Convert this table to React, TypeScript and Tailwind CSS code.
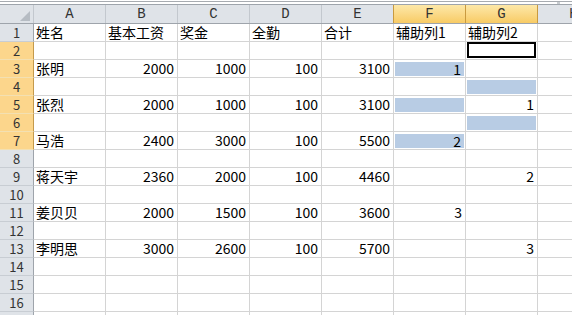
import React from 'react';

type Cell = { t?: string; num?: boolean; fill?: boolean; sel?: boolean };

const FONT = { fontFamily: '"Noto Sans CJK SC", "Noto Sans", sans-serif' };
const HEAD = { fontFamily: '"Liberation Mono", "DejaVu Sans Mono", monospace' };

const names: Record<number, string[]> = {
  1: ['姓名', '基本工资', '奖金', '全勤', '合计', '辅助列1', '辅助列2'],
  3: ['张明', '2000', '1000', '100', '3100', '1', ''],
  5: ['张烈', '2000', '1000', '100', '3100', '', '1'],
  7: ['马浩', '2400', '3000', '100', '5500', '2', ''],
  9: ['蒋天宇', '2360', '2000', '100', '4460', '', '2'],
  11: ['姜贝贝', '2000', '1500', '100', '3600', '3', ''],
  13: ['李明思', '3000', '2600', '100', '5700', '', '3'],
};

const fills: Record<string, boolean> = { '3-5': true, '4-6': true, '5-5': true, '6-6': true, '7-5': true };

function buildRow(r: number): Cell[] {
  const cells: Cell[] = [];
  for (let c = 0; c < 8; c++) {
    const src = names[r];
    const t = src && c < 7 ? src[c] : '';
    cells.push({
      t,
      num: r !== 1 && c > 0,
      fill: !!fills[`${r}-${c}`],
      sel: r === 2 && c === 6,
    });
  }
  return cells;
}

const cols = ['A', 'B', 'C', 'D', 'E', 'F', 'G', 'H'];

function GridCell({ cell }: { cell: Cell }) {
  if (cell.fill) {
    return (
      <div className="w-[72px] h-[18px] shrink-0 border-r border-b border-[#d4d4d4] pt-[2px] px-[1px] pb-[1px]">
        <div className="h-full bg-[#b8cce4] flex items-center justify-end pr-[3px] text-[14px] leading-[14px] text-black">
          {cell.t}
        </div>
      </div>
    );
  }
  if (cell.sel) {
    return (
      <div className="w-[72px] h-[18px] shrink-0 border-r border-b border-[#d4d4d4] pl-[1px] pr-[1px] pb-[1px]">
        <div className="h-full border-2 border-black bg-white" />
      </div>
    );
  }
  return (
    <div
      className={
        cell.num
          ? 'w-[72px] h-[18px] shrink-0 border-r border-b border-[#d4d4d4] flex items-center justify-end pr-[3px] text-[14px] leading-[17px] text-black whitespace-nowrap'
          : 'w-[72px] h-[18px] shrink-0 border-r border-b border-[#d4d4d4] flex items-center justify-start pl-[2px] text-[14px] leading-[17px] text-black whitespace-nowrap'
      }
    >
      {cell.t}
    </div>
  );
}

export default function App() {
  const rows = Array.from({ length: 17 }, (_, i) => i + 1);
  return (
    <div className="w-[572px] h-[315px] overflow-hidden bg-white" style={FONT}>
      {/* top strip */}
      <div className="h-[4px] flex flex-col">
        <div className="h-[1px] bg-white" />
        <div className="h-[1px] bg-[#a7abb0]" />
        <div className="h-[2px] bg-white flex justify-end pr-[12px]">
          <div className="w-[3px] h-[2px] bg-[#c8ccd0]" />
        </div>
      </div>
      {/* column header */}
      <div className="flex h-[20px] border-t border-b border-[#9ea4ab] w-[640px]">
        <div className="w-[34px] h-[18px] shrink-0 bg-[#dfe3e8] border-r border-[#c3c8ce] flex items-end justify-end pr-[3px] pb-[2px]">
          <svg width="10" height="10" viewBox="0 0 10 10">
            <polygon points="10,0 10,10 0,10" fill="#b6bcc3" />
          </svg>
        </div>
        {cols.map((c) =>
          c === 'F' || c === 'G' ? (
            <div
              key={c}
              className="w-[72px] h-[18px] shrink-0 bg-gradient-to-b from-[#fde8a8] to-[#f8cb64] border-r border-[#c99a3f] flex items-center justify-center text-[14px] leading-[18px] text-[#333]"
              style={HEAD}
            >
              {c}
            </div>
          ) : (
            <div
              key={c}
              className={
                c === 'E'
                  ? 'w-[72px] h-[18px] shrink-0 bg-[#dfe3e8] border-r border-[#c99a3f] flex items-center justify-center text-[14px] leading-[18px] text-[#333]'
                  : 'w-[72px] h-[18px] shrink-0 bg-[#dfe3e8] border-r border-[#c3c8ce] flex items-center justify-center text-[14px] leading-[18px] text-[#333]'
              }
              style={HEAD}
            >
              {c}
            </div>
          )
        )}
      </div>
      {/* rows */}
      {rows.map((r) => {
        const hl = r >= 2 && r <= 7;
        return (
          <div key={r} className="flex w-[640px]">
            <div
              className={
                hl
                  ? 'w-[34px] h-[18px] shrink-0 bg-[#fcd68c] border-r border-b border-r-[#c49a4c] border-b-[#f3e0b2] flex items-center justify-center text-[13px] leading-[16px] text-[#333]'
                  : 'w-[34px] h-[18px] shrink-0 bg-[#dfe3e8] border-r border-b border-r-[#9ea4ab] border-b-[#c8cdd3] flex items-center justify-center text-[13px] leading-[16px] text-[#333]'
              }
            >
              {r}
            </div>
            {buildRow(r).map((cell, i) => (
              <GridCell key={i} cell={cell} />
            ))}
          </div>
        );
      })}
    </div>
  );
}
